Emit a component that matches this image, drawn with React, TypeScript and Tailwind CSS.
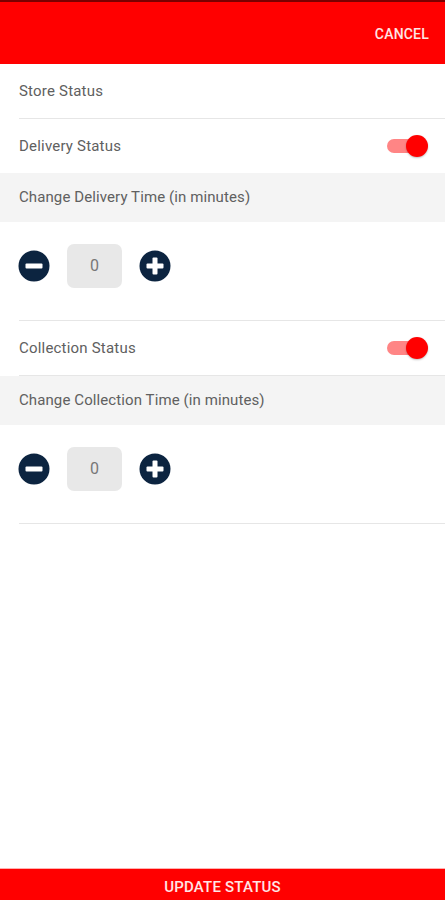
import React from 'react'

const font = { fontFamily: 'Roboto, "Noto Sans", sans-serif' }

function Toggle() {
  return (
    <span className="relative flex h-[22px] w-[42px] items-center">
      <span className="ml-[1px] h-[14px] w-[36px] rounded-full bg-[#ff8585]" />
      <span className="absolute right-0 h-[22px] w-[22px] rounded-full bg-[#ff0000] shadow-[0_1px_2px_rgba(0,0,0,0.25)]" />
    </span>
  )
}

function Round({ plus }: { plus?: boolean }) {
  return (
    <svg viewBox="0 0 32 32" className="h-[32px] w-[32px]">
      <circle cx="16" cy="16" r="15.5" fill="#0c2440" />
      <rect x="7.5" y="13.5" width="17" height="5" rx="1" fill="#fff" />
      {plus && <rect x="13.5" y="7.5" width="5" height="17" rx="1" fill="#fff" />}
    </svg>
  )
}

function Row({ label, toggle }: { label: string; toggle?: boolean }) {
  return (
    <div className="flex h-[54px] items-center justify-between pl-[19px] pr-[17px]">
      <span className="text-[15px] tracking-[0.2px] text-[#606060]">{label}</span>
      {toggle && <Toggle />}
    </div>
  )
}

function Band({ label }: { label: string }) {
  return (
    <div className="flex h-[49px] items-center bg-[#f4f4f4] pl-[19px] text-[15px] tracking-[0.1px] text-[#606060]">
      {label}
    </div>
  )
}

function Stepper() {
  return (
    <div className="h-[98px] pl-[18px] pt-[22px]">
      <div className="flex items-center gap-[17px]">
        <Round />
        <div className="flex h-[44px] w-[55px] items-center justify-center rounded-[7px] bg-[#e8e8e8] text-[16px] text-[#777]">
          0
        </div>
        <Round plus />
      </div>
    </div>
  )
}

const Divider = () => <div className="ml-[19px] h-px bg-[#e6e6e6]" />

export default function App() {
  return (
    <div className="flex h-[900px] w-[445px] flex-col bg-white" style={font}>
      <div className="h-[2px] bg-[#7a0000]" />
      <header className="flex h-[62px] items-center justify-end bg-[#ff0000] pr-[16px]">
        <span className="mt-[2px] text-[14px] font-medium tracking-[0.2px] text-white/90">CANCEL</span>
      </header>
      <Row label="Store Status" />
      <Divider />
      <Row label="Delivery Status" toggle />
      <Band label="Change Delivery Time (in minutes)" />
      <Stepper />
      <Divider />
      <Row label="Collection Status" toggle />
      <Divider />
      <Band label="Change Collection Time (in minutes)" />
      <Stepper />
      <Divider />
      <div className="flex-1" />
      <button className="flex h-[32px] items-center justify-center border-t border-[#ffb0b0] bg-[#ff0000] pt-[6px] text-[15px] font-medium tracking-[0.2px] text-white/90">
        UPDATE STATUS
      </button>
    </div>
  )
}
